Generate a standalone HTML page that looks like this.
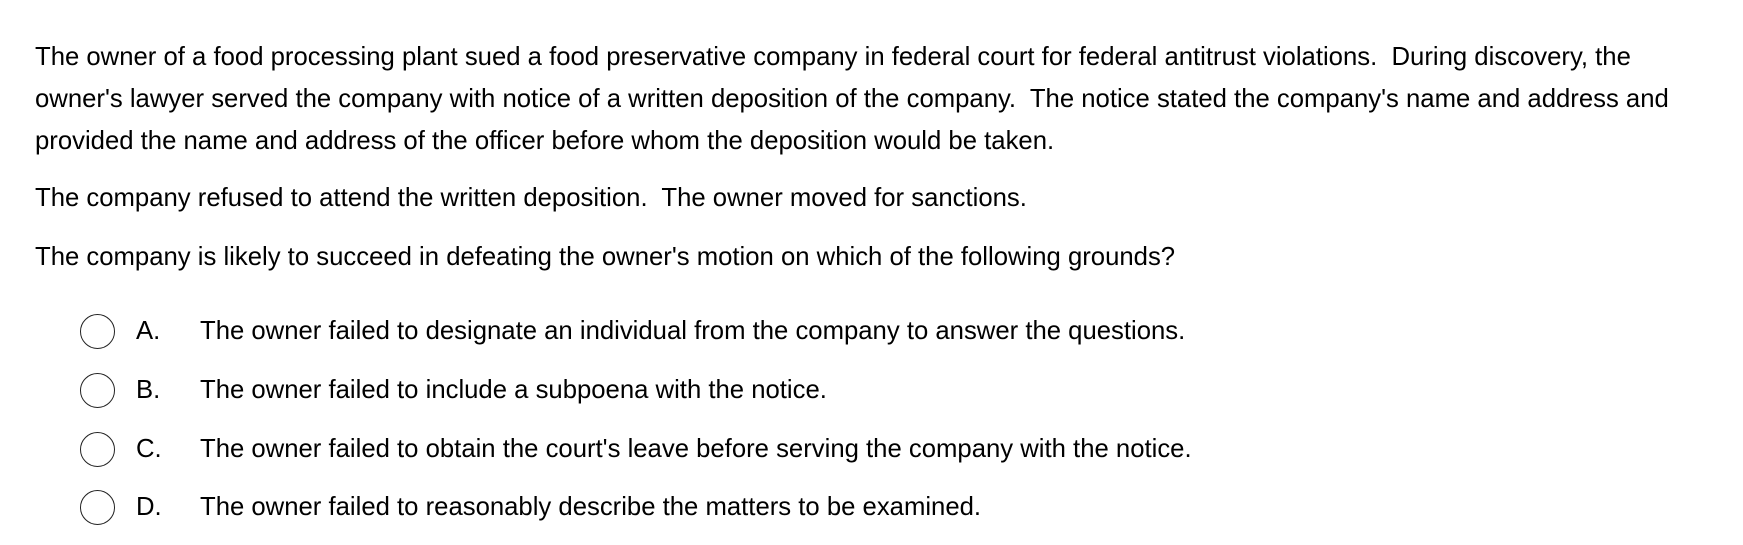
<!DOCTYPE html>
<html><head><meta charset="utf-8"><style>
html,body{margin:0;padding:0;background:#fff;width:1743px;height:545px;overflow:hidden}
body{font-family:"Liberation Sans",Arial,sans-serif;font-size:25.7px;color:#000;position:relative}
.p{position:absolute;left:35px;width:1700px;line-height:42px;margin:0;white-space:nowrap}
.o{position:absolute;left:0;height:41px;line-height:41px;width:1700px}
.c{position:absolute;left:80px;width:35px;height:35px;border:1.3px solid #222;border-radius:50%;box-sizing:border-box}
.l{position:absolute;left:136px}
.t{position:absolute;left:200px;white-space:nowrap}
</style></head><body>
<div class="p" style="top:36px">The owner of a food processing plant sued a food preservative company in federal court for federal antitrust violations.&nbsp; During discovery, the<br>owner's lawyer served the company with notice of a written deposition of the company.&nbsp; The notice stated the company's name and address and<br>provided the name and address of the officer before whom the deposition would be taken.</div>
<div class="p" style="top:177px">The company refused to attend the written deposition.&nbsp; The owner moved for sanctions.</div>
<div class="p" style="top:236px">The company is likely to succeed in defeating the owner's motion on which of the following grounds?</div>

<div class="o" style="top:311px"><div class="c" style="top:3px"></div><span class="l">A.</span><span class="t">The owner failed to designate an individual from the company to answer the questions.</span></div>
<div class="o" style="top:370px"><div class="c" style="top:3px"></div><span class="l">B.</span><span class="t">The owner failed to include a subpoena with the notice.</span></div>
<div class="o" style="top:429px"><div class="c" style="top:3px"></div><span class="l">C.</span><span class="t">The owner failed to obtain the court's leave before serving the company with the notice.</span></div>
<div class="o" style="top:487px"><div class="c" style="top:3px"></div><span class="l">D.</span><span class="t">The owner failed to reasonably describe the matters to be examined.</span></div>
</body></html>
